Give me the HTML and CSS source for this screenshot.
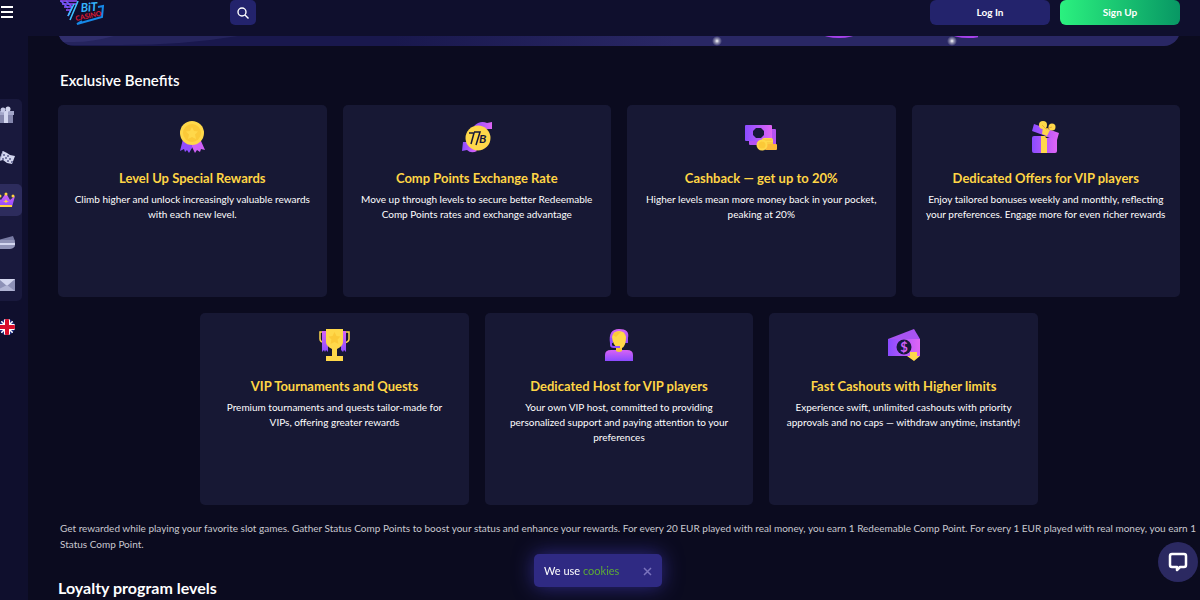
FILE: index.html
```html
<!DOCTYPE html>
<html lang="en">
<head>
  <meta charset="UTF-8">
  <meta name="viewport" content="width=device-width, initial-scale=1">
  <title>7Bit Casino - VIP</title>
  <link rel="stylesheet" href="styles.css">
</head>
<body>

  <svg class="defs" width="0" height="0" aria-hidden="true">
    <defs>
      <linearGradient id="violet" x1="0" y1="0" x2="1" y2="0">
        <stop offset="0" stop-color="#8a4bff"/>
        <stop offset="1" stop-color="#e065f5"/>
      </linearGradient>
      <linearGradient id="violetDown" x1="0" y1="0" x2="0" y2="1">
        <stop offset="0" stop-color="#d863f5"/>
        <stop offset="1" stop-color="#8a4bff"/>
      </linearGradient>
      <radialGradient id="spark">
        <stop offset="0" stop-color="#fff"/>
        <stop offset=".4" stop-color="#fff" stop-opacity=".5"/>
        <stop offset="1" stop-color="#fff" stop-opacity="0"/>
      </radialGradient>
    </defs>
  </svg>

  <header class="header">
    <button class="burger" aria-label="Menu"><span></span><span></span><span></span></button>
    <a href="#" class="logo" aria-label="7Bit Casino">
      <svg width="46" height="26" viewBox="0 0 46 26">
        <g fill="none" stroke-width="1.6">
          <path d="M0 1h17M2 4h14M4 7h8M6 10h5" stroke="#9a4dff"/>
          <path d="M1 1l7 7M6 1l6 6-4 9" stroke="#6d5cff"/>
          <path d="M18 1l-8 19M14 4L8 16" stroke="#3fc0ff"/>
          <path d="M38 7l5-1-1 11-25 7 5-3" stroke="#1689e8" stroke-width="2"/>
        </g>
        <text x="21" y="12" class="logo-bit" transform="rotate(-4 21 12)">BiT</text>
        <text x="16" y="21" class="logo-casino" transform="rotate(-12 16 21)">CASINO</text>
      </svg>
    </a>
    <button class="search" aria-label="Search">
      <svg width="12" height="12" viewBox="0 0 12 12" fill="none" stroke="#fff" stroke-width="1.4">
        <circle cx="5" cy="5" r="4"/>
        <path d="M8 8l3.5 3.5"/>
      </svg>
    </button>
    <div class="auth">
      <button class="btn btn-login">Log In</button>
      <button class="btn btn-signup">Sign Up</button>
    </div>
  </header>

  <aside class="sidebar">
    <nav class="side-menu">
      <a href="#" aria-label="Bonuses">
        <svg width="20" height="20" viewBox="0 0 20 20">
          <path d="M2 9h16v9H2z" fill="#8486ac"/>
          <path d="M1 6h18v4H1z" fill="#a3a6c9"/>
          <path d="M9 6h4v12H9z" fill="#d3d6ef"/>
          <circle cx="8" cy="5" r="2.5" fill="#c5c8e6"/>
          <circle cx="13" cy="4" r="2.5" fill="#d3d6ef"/>
        </svg>
      </a>
      <a href="#" aria-label="Tournaments">
        <svg width="20" height="20" viewBox="0 0 20 20">
          <path d="M8 3l4 2 3 2 5 1-3 8-5-1-4-3-4 1z" fill="#d3d6ef"/>
          <path d="M8 6h2v2H8zM12 7h2v2h-2zM10 9h2v2h-2zM14 10h2v2h-2zM12 12h2v2h-2zM16 13h2v2h-2zM7 10h2v2H7z" fill="#777aa3"/>
          <path d="M8 3L3 17" stroke="#a3a6c9"/>
        </svg>
      </a>
      <a href="#" class="active" aria-label="VIP">
        <svg width="20" height="20" viewBox="0 0 20 20">
          <path d="M1 6l5 4 5-7 4 7 5-4-3 11H4z" fill="url(#violetDown)"/>
          <path d="M4 15h13v2H4z" fill="#ffd33c"/>
          <g fill="#ffd33c">
            <circle cx="11" cy="4" r="1.5"/><circle cx="18" cy="6" r="1.5"/><circle cx="5" cy="6" r="1.5"/>
            <path d="M11 9l1 2 2 0-2 1-1 1-1-1-2-1h2z"/>
          </g>
        </svg>
      </a>
      <a href="#" aria-label="Payments">
        <svg width="20" height="20" viewBox="0 0 20 20">
          <path d="M3 7l15-4 2 5-17 3z" fill="#777aa3"/>
          <path d="M1 7h17q2 0 2 2v3q0 3-5 4H1z" fill="#9194b8"/>
          <path d="M1 10h19v2H1z" fill="#d3d6ef"/>
        </svg>
      </a>
      <a href="#" aria-label="Contacts">
        <svg width="20" height="20" viewBox="0 0 20 20">
          <path d="M0 4h20v12H0z" fill="#8d90b6"/>
          <path d="M4 4h16l-8 7z" fill="#d3d6ef"/>
          <path d="M0 16h20l-8-6z" fill="#b0b3d3"/>
        </svg>
      </a>
    </nav>
    <button class="lang" aria-label="English">
      <svg width="16" height="16" viewBox="0 0 16 16">
        <clipPath id="round"><circle cx="8" cy="8" r="8"/></clipPath>
        <g clip-path="url(#round)">
          <path d="M0 0h16v16H0z" fill="#1e2f83"/>
          <path d="M0 0l16 16M16 0L0 16" stroke="#fff" stroke-width="1.5"/>
          <path d="M8 0v16M0 8h16" stroke="#fff" stroke-width="6"/>
          <path d="M8 0v16M0 8h16" stroke="#d80f2c" stroke-width="4"/>
        </g>
      </svg>
    </button>
  </aside>

  <main class="content">
    <div class="banner">
      <svg class="banner-waves" width="200" height="46" viewBox="0 0 200 46">
        <path d="M0 0h180V36q-60 10-130 9H0z" fill="#25245d"/>
        <path d="M0 36h56q-22 6-40 6H0z" fill="#302e6c"/>
      </svg>
      <svg class="banner-sparks" width="280" height="46" viewBox="0 0 280 46">
        <ellipse cx="141" cy="34" rx="16" ry="4" fill="#a742ec"/>
        <ellipse cx="270" cy="34" rx="16" ry="4" fill="#a742ec"/>
        <circle cx="19" cy="41" r="5" fill="url(#spark)"/>
        <circle cx="254" cy="41" r="5" fill="url(#spark)"/>
      </svg>
    </div>

    <h2 class="section-title">Exclusive Benefits</h2>

    <div class="benefits">
      <div class="card">
        <svg width="32" height="32" viewBox="0 0 32 32">
          <path d="M7 18h9v9l-3 5-2-3-2 2-1-3-4 2z" fill="#914cff"/>
          <path d="M16 20h9l4 9-4-1-1 3-3-2-2 3-3-6z" fill="#ce61f7"/>
          <circle cx="16" cy="12" r="12" fill="#ffd84a"/>
          <circle cx="16" cy="12" r="9" fill="#fbc938"/>
          <path d="M16 6l2 4 4 .6-3 3 1 4.400-4-2-4 2 1-4.400-3-3 4-.6z" fill="#ffd84a"/>
        </svg>
        <h3>Level Up Special Rewards</h3>
        <p>Climb higher and unlock increasingly valuable rewards with each new level.</p>
      </div>
      <div class="card">
        <svg width="32" height="32" viewBox="0 0 32 32">
          <path d="M13 5q6-6 13-3l5-1v7h-9z" fill="url(#violet)"/>
          <path d="M2 21h6l8 9q-6 3-10-1l-5 1z" fill="url(#violet)"/>
          <circle cx="17" cy="17" r="12.500" fill="#ffd84a"/>
          <path d="M8 12h5l-3 11M13 11h6l-4 13" fill="none" stroke="#17183a" stroke-width="1.500"/>
          <text x="18" y="22" class="coin-text">B</text>
        </svg>
        <h3>Comp Points Exchange Rate</h3>
        <p>Move up through levels to secure better Redeemable Comp Points rates and exchange advantage</p>
      </div>
      <div class="card">
        <svg width="32" height="32" viewBox="0 0 32 32">
          <rect x="4" y="8" width="27" height="16" rx="1" fill="#b552f2"/>
          <rect x="0" y="4" width="27" height="16" rx="1" fill="url(#violet)"/>
          <path d="M11 7h5l3 3v4l-3 3h-5l-3-3v-4z" fill="#17183a"/>
          <rect x="17" y="17" width="11" height="10" rx="2" fill="#ffd84a"/>
          <path d="M18 19h9M20 22h8" stroke="#f5bd36"/>
          <rect x="20" y="23" width="12" height="6" rx="1" fill="#fbb93a"/>
          <circle cx="17" cy="24" r="5.500" fill="#ffd84a"/>
          <circle cx="17" cy="24" r="3.500" fill="#fbc938"/>
        </svg>
        <h3>Cashback — get up to 20%</h3>
        <p>Higher levels mean more money back in your pocket, peaking at 20%</p>
      </div>
      <div class="card">
        <svg width="32" height="32" viewBox="0 0 32 32">
          <rect x="2" y="15" width="25" height="17" rx="2" fill="url(#violet)"/>
          <path d="M11 15h6v17h-6z" fill="#ffd84a"/>
          <path d="M1 10l19 7h-4l-1-2H1z" fill="#171834"/>
          <path d="M4 3l25 9-2 7-25-9z" fill="url(#violet)"/>
          <path d="M13 6l7 3-3 6-5-2z" fill="#ffd84a"/>
          <circle cx="13" cy="4" r="4" fill="#ffd84a"/>
          <circle cx="22" cy="6" r="3.500" fill="#ffd84a"/>
          <path d="M12 4l4 4 6-2" fill="none" stroke="#efae34"/>
        </svg>
        <h3>Dedicated Offers for VIP players</h3>
        <p>Enjoy tailored bonuses weekly and monthly, reflecting your preferences. Engage more for even richer rewards</p>
      </div>
      <div class="card">
        <svg width="32" height="32" viewBox="0 0 32 32">
          <path d="M7 3H1v7q0 3 5 4M24 3h6v7q0 3-5 4" fill="none" stroke="#ffd84a" stroke-width="1.500"/>
          <path d="M3 2h6v21l-2-2-1 2-1-2-2 2zM22 2h5v21l-2-2-1 2-2-2z" fill="url(#violetDown)"/>
          <path d="M7 0h17v13q0 4-6 7v7h6v5H7v-5h6v-7q-6-3-6-7z" fill="#ffd84a"/>
          <path d="M15.500 3l2 4 4 .6-3 3 1 4.400-4-2-4 2 1-4.400-3-3 4-.6z" fill="#fbc938"/>
        </svg>
        <h3>VIP Tournaments and Quests</h3>
        <p>Premium tournaments and quests tailor-made for<br>VIPs, offering greater rewards</p>
      </div>
      <div class="card">
        <svg width="32" height="32" viewBox="0 0 32 32">
          <path d="M2 32v-6q0-5 6-5h16q6 0 6 5v6z" fill="url(#violetDown)"/>
          <path d="M13 17h6v5q-3 2-6 0z" fill="#fbc938"/>
          <path d="M7 14q-2-14 9-14t9 9v5h-3V5H10v9z" fill="url(#violetDown)"/>
          <path d="M9 8q1-6 7-6t7 6q0 9-4 11h-4q-5-2-6-11z" fill="#ffd84a"/>
          <path d="M10 6q3-4 8-3l-5 5z" fill="#fbc938"/>
          <path d="M8 9v7q0 2 3 2h6" fill="none" stroke="#914cff" stroke-width="2"/>
        </svg>
        <h3>Dedicated Host for VIP players</h3>
        <p>Your own VIP host, committed to providing personalized support and paying attention to your preferences</p>
      </div>
      <div class="card">
        <svg width="32" height="32" viewBox="0 0 32 32">
          <path d="M0 10L26 0l6 10z" fill="#a954f2"/>
          <rect x="0" y="10" width="32" height="17" fill="url(#violet)"/>
          <circle cx="16" cy="18" r="7.500" fill="#17183a"/>
          <text x="16" y="23" class="dollar-text">$</text>
          <path d="M22 23h7v4h3l-6 5-7-5h3z" fill="#ffd84a"/>
        </svg>
        <h3>Fast Cashouts with Higher limits</h3>
        <p>Experience swift, unlimited cashouts with priority approvals and no caps — withdraw anytime, instantly!</p>
      </div>
    </div>

    <p class="intro">Get rewarded while playing your favorite slot games. Gather Status Comp Points to boost your status and enhance your rewards. For every 20 EUR played with real money, you earn 1 Redeemable Comp Point. For every 1 EUR played with real money, you earn 1<br>Status Comp Point.</p>

    <h2 class="levels-title">Loyalty program levels</h2>
  </main>

  <div class="cookies">
    <span>We use <a href="#">cookies</a></span>
    <button aria-label="Close">
      <svg width="9" height="9" viewBox="0 0 9 9"><path d="M1 1l7 7M8 1L1 8" stroke="#7a73bd" stroke-width="1.500"/></svg>
    </button>
  </div>

  <button class="chat" aria-label="Chat">
    <svg width="20" height="20" viewBox="0 0 20 20">
      <path d="M4 2h12q2 0 2 2v9q0 2-2 2h-4l-3 3v-3H4q-2 0-2-2V4q0-2 2-2z" fill="none" stroke="#fff" stroke-width="2.500" stroke-linejoin="round"/>
    </svg>
  </button>

</body>
</html>
```
FILE: styles.css
```css
* {
  box-sizing: border-box;
}

body {
  margin: 0;
  height: 100vh;
  overflow: hidden;
  background-color: #0b0b1f;
  color: #fff;
  font-family: Lato, "Open Sans", sans-serif;
  font-size: 10px;
}

h2, h3, p {
  margin: 0;
}

button {
  border: none;
  padding: 0;
  color: #fff;
  font-family: inherit;
  cursor: pointer;
}

.defs {
  position: absolute;
}

.header {
  position: fixed;
  top: 0;
  left: 0;
  right: 0;
  z-index: 2;
  height: 36px;
  padding-right: 20px;
  display: flex;
  align-items: flex-start;
  background-color: #0f0f2d;
}

.burger {
  width: 13px;
  height: 24px;
  margin-right: 47px;
  display: flex;
  flex-direction: column;
  justify-content: center;
  gap: 3px;
  background: none;
}

.burger span {
  height: 2px;
  margin-left: 1px;
  background-color: #fff;
}

.logo {
  width: 46px;
  margin-right: 124px;
}

.logo-bit {
  fill: #35b6ff;
  font-size: 12px;
  font-style: italic;
  font-weight: bold;
}

.logo-casino {
  fill: #e01c35;
  font-size: 7px;
  font-weight: bold;
}

.search {
  width: 26px;
  height: 25px;
  display: flex;
  align-items: center;
  justify-content: center;
  border-radius: 5px;
  background-color: #23236c;
}

.auth {
  margin-left: auto;
  display: flex;
  gap: 10px;
}

.btn {
  width: 120px;
  height: 25px;
  padding-bottom: 2px;
  border-radius: 6px;
  font-size: 10px;
  font-weight: bold;
}

.btn-login {
  background-color: #23236c;
}

.btn-signup {
  background: linear-gradient(90deg, #2bf17f, #089764);
}

.sidebar {
  position: fixed;
  top: 36px;
  left: 0;
  bottom: 0;
  width: 28px;
  padding-top: 63px;
  background-color: #0f0f2d;
}

.side-menu {
  width: 22px;
  height: 202px;
  display: flex;
  flex-direction: column;
  justify-content: space-between;
  border-radius: 0 5px 5px 0;
  background-color: #19193d;
}

.side-menu a,
.lang {
  width: 22px;
  height: 32px;
  padding-right: 7px;
  display: flex;
  align-items: center;
  justify-content: flex-end;
  overflow: hidden;
}

.side-menu svg,
.lang svg {
  flex-shrink: 0;
}

.side-menu .active {
  border-radius: 0 5px 5px 0;
  background-color: #2d2c5d;
}

.lang {
  margin-top: 10px;
  background: none;
}

.content {
  margin-left: 28px;
  padding: 0 20px 0 30px;
}

.banner {
  height: 46px;
  display: flex;
  justify-content: space-between;
  overflow: hidden;
  border-radius: 0 0 16px 16px;
  background: linear-gradient(90deg, #19184d, #19184d 30%, #292764 55%);
}

.banner-sparks {
  margin-right: 202px;
}

.section-title {
  margin: 24px 0 15px 2px;
  font-size: 15px;
  font-weight: 600;
  line-height: 20px;
}

.benefits {
  display: flex;
  flex-wrap: wrap;
  justify-content: center;
  gap: 16px;
}

.card {
  width: calc((100% - 48px) / 4);
  min-height: 192px;
  padding: 16px 12px;
  display: flex;
  flex-direction: column;
  align-items: center;
  border-radius: 5px;
  background-color: #171834;
  text-align: center;
}

.card h3 {
  margin: 15px 0 4px;
  color: #ffd545;
  font-size: 13px;
  line-height: 20px;
}

.card p {
  line-height: 15px;
}

.coin-text {
  fill: #17183a;
  font-size: 12px;
  font-style: italic;
  font-weight: bold;
}

.dollar-text {
  fill: #cf60f6;
  font-size: 13px;
  font-weight: bold;
  text-anchor: middle;
}

.intro {
  margin: 15px -18px 0 2px;
  color: #c9c9cf;
  line-height: 16px;
}

.levels-title {
  margin-top: 26px;
  font-size: 16px;
  line-height: 20px;
}

.cookies {
  position: fixed;
  left: 0;
  right: 4px;
  bottom: 13px;
  width: 128px;
  height: 33px;
  margin: 0 auto;
  padding: 0 10px;
  display: flex;
  align-items: center;
  justify-content: space-between;
  border-radius: 5px;
  background-color: #2f2a83;
  box-shadow: 0 0 20px #2f2a83;
  font-size: 11px;
}

.cookies a {
  color: #5dab35;
  text-decoration: none;
}

.cookies button {
  background: none;
}

.chat {
  position: fixed;
  right: 2px;
  bottom: 18px;
  width: 40px;
  height: 40px;
  display: flex;
  align-items: center;
  justify-content: center;
  border-radius: 50%;
  background-color: #2b2961;
}
```
